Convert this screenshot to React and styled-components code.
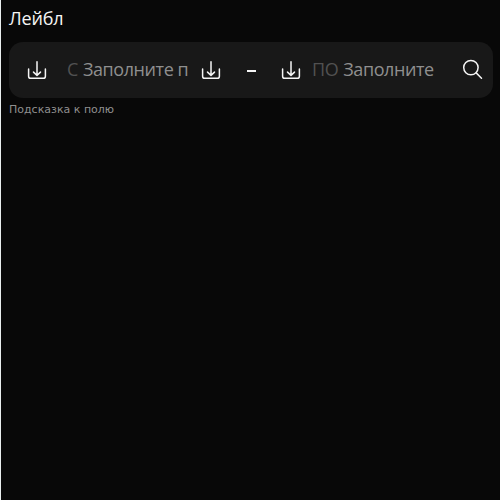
import React from "react";
import styled, { createGlobalStyle } from "styled-components";

const GlobalStyle = createGlobalStyle`
  * { box-sizing: border-box; }
  body { margin: 0; background: #080808; }
`;

const Page = styled.main`
  width: 500px;
  height: 500px;
  padding: 6px 7px 0 8px;
  border-left: 1px solid #e9eeee;
  background: #080808;
  color: #f5f5f5;
  font-family: "Open Sans", "Noto Sans", sans-serif;
  overflow: hidden;
`;

const Label = styled.label`
  display: block;
  height: 24px;
  margin-bottom: 12px;
  font-size: 18px;
  line-height: 24px;
  letter-spacing: -0.15px;
`;

const Range = styled.div`
  display: flex;
  align-items: center;
  height: 56px;
  padding: 0 7px 0 16px;
  border-radius: 14px;
  background: #181818;
`;

const Field = styled.div`
  display: flex;
  flex: none;
  width: ${(p) => p.$width}px;
  margin-left: ${(p) => p.$gap}px;
  padding-bottom: 2px;
  font-size: 18px;
  line-height: 24px;
  letter-spacing: -0.42px;
  white-space: pre;
`;

const Before = styled.span`
  color: #515151;
`;

const Placeholder = styled.span`
  margin-left: 5px;
  color: #8f8f8f;
`;

const Dash = styled.span`
  width: 9px;
  height: 2px;
  margin: 2px 19px 0 24px;
  background: #f5f5f5;
`;

const Icon = styled.svg`
  flex: none;
  width: 24px;
  height: 24px;
  margin-left: ${(p) => p.$gap || 0}px;
  fill: none;
  stroke: #f5f5f5;
  stroke-linecap: round;
  stroke-linejoin: round;
`;

const Hint = styled.div`
  margin-top: 5px;
  color: #8f8f8f;
  font-family: "DejaVu Sans", sans-serif;
  font-size: 11px;
  line-height: 14px;
`;

const DownloadIcon = ({ gap }) => (
  <Icon viewBox="0 0 24 24" $gap={gap} strokeWidth="1.5">
    <path d="M3.6 10.9V18.2Q3.6 20.3 5.7 20.3H18.3Q20.4 20.3 20.4 18.2V10.9" />
    <path d="M12 3.7V17M8.5 14.1L12 17.4L15.5 14.1" />
  </Icon>
);

const SearchIcon = ({ gap }) => (
  <Icon viewBox="0 0 24 24" $gap={gap} strokeWidth="1.5">
    <circle cx="9.9" cy="9.6" r="7.2" />
    <path d="M15.2 14.9L20.5 20.2" />
  </Icon>
);

export default function App() {
  return (
    <>
      <GlobalStyle />
      <Page>
        <Label>Лейбл</Label>
        <Range>
          <DownloadIcon />
          <Field $gap={18} $width={121}>
            <Before>С</Before>
            <Placeholder>Заполните п</Placeholder>
          </Field>
          <DownloadIcon gap={11} />
          <Dash />
          <DownloadIcon gap={4} />
          <Field $gap={9} $width={124}>
            <Before>ПО</Before>
            <Placeholder>Заполните</Placeholder>
          </Field>
          <SearchIcon gap={25} />
        </Range>
        <Hint>Подсказка к полю</Hint>
      </Page>
    </>
  );
}
